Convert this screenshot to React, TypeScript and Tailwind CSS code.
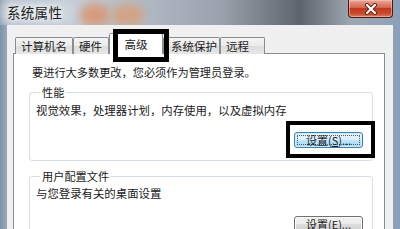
import React from "react";

const tabs = [
  { label: "计算机名", w: "w-[58px] justify-center" },
  { label: "硬件", w: "w-[36px] pl-[5px]" },
  { label: "高级", w: "w-[54px] justify-center", active: true },
  { label: "系统保护", w: "w-[57px] pl-[7px]" },
  { label: "远程", w: "w-[45px] pl-[5px]" },
];

function WinButton({ label, hotkey, focused }: { label: string; hotkey: string; focused?: boolean }) {
  return (
    <button
      className={`relative w-[69px] h-[16px] rounded-[3px] border flex items-center justify-center text-[11px] leading-none ${
        focused
          ? "border-[#3c7fb1] bg-[linear-gradient(#eaf6fd,#d9f0fc_50%,#bee6fd_51%,#a7d9f5)] shadow-[inset_0_0_0_1px_#c8ecfb]"
          : "border-[#707070] bg-[linear-gradient(#f2f2f2,#ebebeb_50%,#dddddd_51%,#cfcfcf)] shadow-[inset_0_0_0_1px_#fcfcfc]"
      }`}
    >
      {focused && (
        <span className="absolute inset-[2px] border border-dotted border-[#555] rounded-[1px]" />
      )}
      <span className="relative">
        {label}(<span className="underline">{hotkey}</span>)...
      </span>
    </button>
  );
}

export default function App() {
  return (
    <div className="relative w-[400px] h-[229px] overflow-hidden flex flex-col bg-[linear-gradient(90deg,#7f93a8,#a9b9ca_3%,#c3ccd6_20%,#9aa3ad_55%,#5d646d_75%,#9ea8b3_88%,#8aa0b8)] font-['Noto_Sans_CJK_SC',sans-serif] text-[#1b1b1b]">
      {/* title bar */}
      <div className="relative shrink-0 h-[25px] flex items-center justify-between pl-[7px] pr-[7px] overflow-hidden">
        <span className="absolute left-[0px] top-[0px] w-[75px] h-[25px] bg-[#cfd6de] blur-[6px]" />
        <span className="absolute left-[80px] top-[4px] w-[30px] h-[22px] rounded-full bg-[#d79a7c] blur-[5px]" />
        <span className="absolute left-[112px] top-[4px] w-[32px] h-[22px] rounded-full bg-[#d3a386] blur-[5px]" />
        <span className="relative text-[13.5px] leading-none tracking-[0.3px] [text-shadow:0_0_5px_#fff,0_0_8px_#fff]">
          系统属性
        </span>
        <div className="relative self-start w-[45px] h-[18px] rounded-b-[4px] border border-t-0 border-[#4a1b12] bg-[linear-gradient(#e9a998,#d4644c_45%,#c0391f_50%,#c84c30_80%,#e07a5c)] flex items-center justify-center shadow-[inset_0_0_0_1px_rgba(255,210,200,0.5)]">
          <svg width="14" height="12" viewBox="0 0 14 12">
            <path d="M3 2 L11 10 M11 2 L3 10" stroke="#5a2418" strokeWidth="4" strokeLinecap="round" />
            <path d="M3 2 L11 10 M11 2 L3 10" stroke="#ffffff" strokeWidth="2.2" strokeLinecap="round" />
          </svg>
        </div>
      </div>

      {/* frame + client */}
      <div className="flex-1 min-h-0 flex px-[7px]">
        <div className="flex-1 min-h-0 overflow-hidden bg-[#f0f0f0] flex flex-col pl-[6px] pr-[8px] pt-[8px]">
          {/* tabs */}
          <div className="relative z-10 shrink-0 flex items-end pl-[2px] -mb-px h-[21px]">
            {tabs.map((t) =>
              t.active ? (
                <div
                  key={t.label}
                  className={`relative ${t.w} h-[21px] bg-white border border-b-0 border-[#898c95] rounded-t-[2px] flex items-start pt-[3px] text-[11.5px] leading-[14px]`}
                >
                  {t.label}
                  <span className="absolute left-[3px] -right-[7px] -top-[5px] -bottom-[8px] border-[5px] border-black" />
                </div>
              ) : (
                <div
                  key={t.label}
                  className={`${t.w} h-[17px] border border-b-0 border-[#898c95] rounded-t-[2px] bg-[linear-gradient(#f4f4f4,#ebebeb_50%,#dddddd_51%,#e6e6e6)] flex items-center text-[11.5px] leading-[14px]`}
                >
                  {t.label}
                </div>
              )
            )}
          </div>

          {/* panel */}
          <div className="shrink-0 bg-white border border-[#898c95] pt-[11px] flex flex-col">
            <p className="pl-[18px] text-[11.2px] leading-[14px]">要进行大多数更改，您必须作为管理员登录。</p>

            <fieldset className="mt-[6px] ml-[15px] mr-[11px] border border-[#d5dfe5] rounded-[3px] pl-[6px] pr-[9px] pb-[12px]">
              <legend className="ml-[4px] px-[2px] text-[11.2px] leading-[14px]">性能</legend>
              <p className="mt-[4px] text-[11.4px] leading-[14px]">视觉效果，处理器计划，内存使用，以及虚拟内存</p>
              <div className="mt-[15px] flex justify-end">
                <div className="relative">
                  <WinButton label="设置" hotkey="S" focused />
                  <span className="absolute -left-[8px] -right-[12px] -top-[11px] -bottom-[10px] border-[4px] border-black" />
                </div>
              </div>
            </fieldset>

            <fieldset className="mt-[8px] ml-[15px] mr-[11px] border border-[#d5dfe5] rounded-[3px] pl-[6px] pr-[9px] pb-[11px]">
              <legend className="ml-[4px] px-[2px] text-[11.2px] leading-[14px]">用户配置文件</legend>
              <p className="mt-[3px] text-[11.4px] leading-[14px]">与您登录有关的桌面设置</p>
              <div className="mt-[16px] flex justify-end">
                <WinButton label="设置" hotkey="E" />
              </div>
            </fieldset>
          </div>
        </div>
      </div>
    </div>
  );
}
